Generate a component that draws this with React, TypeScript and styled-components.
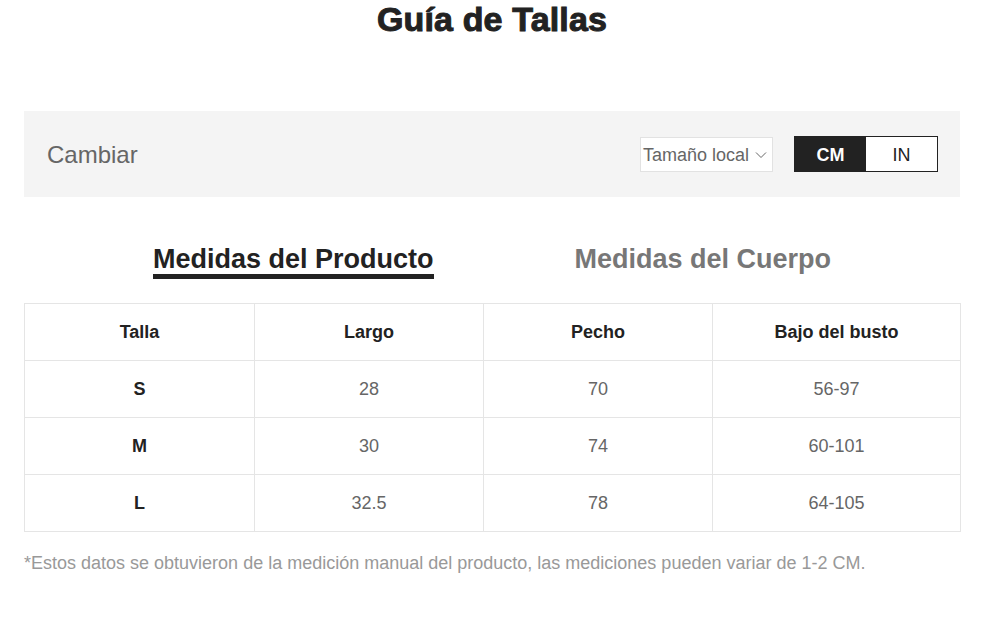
import { createGlobalStyle, styled } from "styled-components";

const DARK = "#222222";
const GRAY = "#666666";
const LINE = "#e5e5e5";

const GlobalStyle = createGlobalStyle`
  body {
    margin: 0;
    background: #ffffff;
    font-family: "Liberation Sans", Arial, sans-serif;
  }
`;

const Page = styled.div`
  width: 936px;
  margin-left: 24px;
`;

const Title = styled.h1`
  margin: 0;
  text-align: center;
  font-size: 34px;
  line-height: 38px;
  font-weight: 700;
  letter-spacing: 0.15px;
  color: ${DARK};
  -webkit-text-stroke: 1px ${DARK};
`;

const Banner = styled.div`
  display: flex;
  align-items: center;
  justify-content: space-between;
  margin-top: 73px;
  height: 86px;
  padding: 0 22px 0 23px;
  background: #f4f4f4;
`;

const BannerLabel = styled.span`
  font-size: 24px;
  line-height: 30px;
  padding-top: 2px;
  color: ${GRAY};
`;

const Controls = styled.div`
  display: flex;
  align-items: center;
  gap: 21px;
`;

const Select = styled.div`
  display: flex;
  align-items: center;
  gap: 6px;
  box-sizing: border-box;
  width: 133px;
  height: 35px;
  padding: 2px 4px 0 2px;
  background: #ffffff;
  border: 1px solid #e2e2e2;
  font-size: 18px;
  color: ${GRAY};
`;

const Toggle = styled.div`
  display: flex;
  box-sizing: border-box;
  height: 36px;
  border: 1px solid ${DARK};
`;

const ToggleOption = styled.div<{ $active: boolean }>`
  display: flex;
  align-items: center;
  justify-content: center;
  width: 71px;
  padding-top: 2px;
  font-size: 18px;
  font-weight: ${(p) => (p.$active ? 700 : 400)};
  color: ${(p) => (p.$active ? "#ffffff" : DARK)};
  background: ${(p) => (p.$active ? DARK : "#ffffff")};
`;

const Tabs = styled.div`
  display: flex;
  justify-content: center;
  gap: 141px;
  margin-top: 47px;
`;

const Tab = styled.div<{ $active: boolean }>`
  font-size: 27px;
  line-height: 30px;
  font-weight: 700;
  color: ${(p) => (p.$active ? DARK : "#777777")};
  border-bottom: 5px solid ${(p) => (p.$active ? DARK : "transparent")};
`;

const Table = styled.table`
  width: 936px;
  margin-top: 24px;
  border-collapse: collapse;
  table-layout: fixed;
`;

const Cell = styled.td<{ $strong?: boolean }>`
  height: 56px;
  padding: 0;
  border: 1px solid ${LINE};
  text-align: center;
  font-size: 18px;
  font-weight: ${(p) => (p.$strong ? 700 : 400)};
  color: ${(p) => (p.$strong ? DARK : GRAY)};
`;

const Note = styled.p`
  margin: 19px 0 0;
  font-size: 18px;
  line-height: 24px;
  color: #999999;
`;

const Chevron = () => (
  <svg width="12" height="8" viewBox="0 0 12 8" fill="none">
    <polyline points="1,1.5 6,6.5 11,1.5" stroke="#666" strokeWidth="1" />
  </svg>
);

const headers = ["Talla", "Largo", "Pecho", "Bajo del busto"];
const rows = [
  ["S", "28", "70", "56-97"],
  ["M", "30", "74", "60-101"],
  ["L", "32.5", "78", "64-105"],
];
const widths = [230, 229, 229, 248];

export default function App() {
  return (
    <>
      <GlobalStyle />
      <Page>
        <Title>Guía de Tallas</Title>
        <Banner>
          <BannerLabel>Cambiar</BannerLabel>
          <Controls>
            <Select>
              <span>Tamaño local</span>
              <Chevron />
            </Select>
            <Toggle>
              <ToggleOption $active>CM</ToggleOption>
              <ToggleOption $active={false}>IN</ToggleOption>
            </Toggle>
          </Controls>
        </Banner>
        <Tabs>
          <Tab $active>Medidas del Producto</Tab>
          <Tab $active={false}>Medidas del Cuerpo</Tab>
        </Tabs>
        <Table>
          <colgroup>
            {widths.map((w, i) => (
              <col key={i} style={{ width: w }} />
            ))}
          </colgroup>
          <thead>
            <tr>
              {headers.map((h) => (
                <Cell as="th" key={h} $strong>
                  {h}
                </Cell>
              ))}
            </tr>
          </thead>
          <tbody>
            {rows.map((r) => (
              <tr key={r[0]}>
                {r.map((v, i) => (
                  <Cell key={i} $strong={i === 0}>
                    {v}
                  </Cell>
                ))}
              </tr>
            ))}
          </tbody>
        </Table>
        <Note>
          *Estos datos se obtuvieron de la medición manual del producto, las
          mediciones pueden variar de 1-2 CM.
        </Note>
      </Page>
    </>
  );
}
